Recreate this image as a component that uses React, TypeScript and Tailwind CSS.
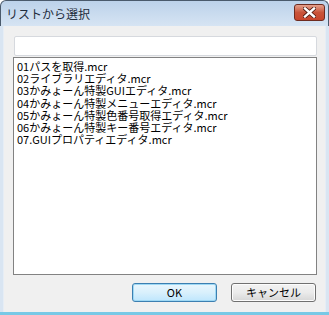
import React from "react";

const items = [
  "01パスを取得.mcr",
  "02ライブラリエディタ.mcr",
  "03かみょーん特製GUIエディタ.mcr",
  "04かみょーん特製メニューエディタ.mcr",
  "05かみょーん特製色番号取得エディタ.mcr",
  "06かみょーん特製キー番号エディタ.mcr",
  "07.GUIプロパティエディタ.mcr",
];

const font = { fontFamily: '"Noto Sans CJK JP", "Liberation Sans", sans-serif' };

export default function App() {
  return (
    <div className="w-[329px] h-[315px] flex flex-col overflow-hidden" style={font}>
      <div className="h-[26px] flex items-center justify-between rounded-t-[6px] border-t border-x border-[#4a5a6c] bg-gradient-to-b from-[#bcd2ea] to-[#d6e4f3] pl-[5px] pr-[3px]">
        <span className="text-[12px] leading-none text-[#1e2c3c]">リストから選択</span>
        <div className="w-[31px] h-[17px] mb-[2px] rounded-[3px] border border-[#6e2b1f] bg-gradient-to-b from-[#e4a08c] via-[#c9543a] to-[#c8452c] flex items-center justify-center">
          <svg width="13" height="11" viewBox="0 0 13 11">
            <path d="M2 1.5 L11 9.5 M11 1.5 L2 9.5" stroke="#4d1a10" strokeWidth="4" strokeLinecap="square" />
            <path d="M2 1.5 L11 9.5 M11 1.5 L2 9.5" stroke="#ffffff" strokeWidth="2.4" strokeLinecap="square" />
          </svg>
        </div>
      </div>
      <div className="flex-1 flex flex-col bg-[#d9e5f2] px-[3px] pb-0">
        <div className="flex-1 flex flex-col bg-[#f0f0f0] border-l border-r border-[#e6edf5] pt-[10px] pl-[9px] pr-[8px]">
          <div className="ml-[1px] h-[20px] bg-white border border-[#d6d9de] rounded-[2px]" />
          <div className="mt-[1px] h-[218px] bg-white border border-[#828282] pl-[3px] pt-[2px]">
            {items.map((t) => (
              <div key={t} className="text-[11px] leading-[12.2px] text-black whitespace-nowrap">
                {t}
              </div>
            ))}
          </div>
          <div className="flex justify-end gap-[14px] mt-[8px] pr-[1px]">
            <button className="w-[85px] h-[19px] rounded-[3px] border border-[#3c7fb1] bg-gradient-to-b from-[#eaf6fd] via-[#d9f0fc] to-[#bee6fd] shadow-[inset_0_0_0_1px_#9ed8f4] text-[11px] leading-none text-black">
              OK
            </button>
            <button className="w-[85px] h-[19px] rounded-[3px] border border-[#707070] bg-gradient-to-b from-[#f2f2f2] via-[#ebebeb] to-[#d6d6d6] shadow-[inset_0_0_0_1px_#fcfcfc] text-[11px] leading-none text-black">
              キャンセル
            </button>
          </div>
        </div>
        <div className="h-[3px] bg-[#78c9e6] -mx-[3px]" />
      </div>
    </div>
  );
}
